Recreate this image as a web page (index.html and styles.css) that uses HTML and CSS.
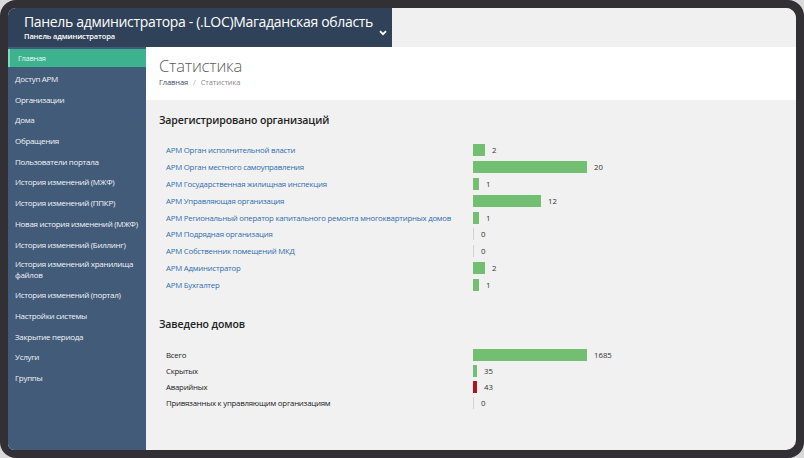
FILE: index.html
```html
<!DOCTYPE html>
<html lang="ru">
<head>
<meta charset="utf-8">
<title>Статистика</title>
<link rel="stylesheet" href="styles.css">
</head>
<body>
<div class="device">
  <div class="screen">
    <div class="topbar">
      <div class="brand">
        <div class="brand-text">
          <div class="brand-title">Панель администратора - (.LOC)Магаданская область</div>
          <div class="brand-sub">Панель администратора</div>
        </div>
        <svg class="chev" width="8" height="6" viewBox="0 0 8 6"><path d="M1 1.2 L4 4.2 L7 1.2" fill="none" stroke="#fff" stroke-width="1.8"/></svg>
      </div>
      <div class="topfill"></div>
    </div>
    <div class="body">
      <nav class="sidebar">
        <a class="nav-item active">Главная</a>
        <a class="nav-item">Доступ АРМ</a>
        <a class="nav-item">Организации</a>
        <a class="nav-item">Дома</a>
        <a class="nav-item">Обращения</a>
        <a class="nav-item">Пользователи портала</a>
        <a class="nav-item">История изменений (МЖФ)</a>
        <a class="nav-item">История изменений (ППКР)</a>
        <a class="nav-item">Новая история изменений (МЖФ)</a>
        <a class="nav-item">История изменений (Биллинг)</a>
        <a class="nav-item two">История изменений хранилища<br>файлов</a>
        <a class="nav-item">История изменений (портал)</a>
        <a class="nav-item">Настройки системы</a>
        <a class="nav-item">Закрытие периода</a>
        <a class="nav-item">Услуги</a>
        <a class="nav-item">Группы</a>
      </nav>
      <main class="content">
        <div class="page-head">
          <h1 class="page-title">Статистика</h1>
          <div class="crumbs"><span class="crumb-home">Главная</span><span class="crumb-sep">/</span><span>Статистика</span></div>
        </div>
        <div class="page-body">
          <h2 class="section-title">Зарегистрировано организаций</h2>
          <div class="stats orgs">
            <div class="row"><a class="label link">АРМ Орган исполнительной власти</a><div class="val"><span class="bar" style="width:12px"></span><span class="num">2</span></div></div>
            <div class="row"><a class="label link">АРМ Орган местного самоуправления</a><div class="val"><span class="bar" style="width:114px"></span><span class="num">20</span></div></div>
            <div class="row"><a class="label link">АРМ Государственная жилищная инспекция</a><div class="val"><span class="bar" style="width:6px"></span><span class="num">1</span></div></div>
            <div class="row"><a class="label link">АРМ Управляющая организация</a><div class="val"><span class="bar" style="width:68px"></span><span class="num">12</span></div></div>
            <div class="row"><a class="label link">АРМ Региональный оператор капитального ремонта многоквартирных домов</a><div class="val"><span class="bar" style="width:6px"></span><span class="num">1</span></div></div>
            <div class="row"><a class="label link">АРМ Подрядная организация</a><div class="val"><span class="bar zero"></span><span class="num">0</span></div></div>
            <div class="row"><a class="label link">АРМ Собственник помещений МКД</a><div class="val"><span class="bar zero"></span><span class="num">0</span></div></div>
            <div class="row"><a class="label link">АРМ Администратор</a><div class="val"><span class="bar" style="width:12px"></span><span class="num">2</span></div></div>
            <div class="row"><a class="label link">АРМ Бухгалтер</a><div class="val"><span class="bar" style="width:6px"></span><span class="num">1</span></div></div>
          </div>
          <h2 class="section-title houses-title">Заведено домов</h2>
          <div class="stats houses">
            <div class="row"><span class="label">Всего</span><div class="val"><span class="bar" style="width:114px"></span><span class="num">1685</span></div></div>
            <div class="row"><span class="label">Скрытых</span><div class="val"><span class="bar" style="width:4px"></span><span class="num">35</span></div></div>
            <div class="row"><span class="label">Аварийных</span><div class="val"><span class="bar red" style="width:4px"></span><span class="num">43</span></div></div>
            <div class="row"><span class="label">Привязанных к управляющим организациям</span><div class="val"><span class="bar zero"></span><span class="num">0</span></div></div>
          </div>
        </div>
      </main>
    </div>
  </div>
</div>
</body>
</html>
```
FILE: styles.css
```css
* { box-sizing: border-box; }
html, body { margin: 0; padding: 0; background: #d9d9d9; }
body { font-family: "Open Sans", "Liberation Sans", sans-serif; }

.device {
  width: 804px;
  height: 458px;
  background: #323034;
  border-radius: 16px;
  padding: 8px;
}
.screen {
  width: 788px;
  height: 442px;
  border-radius: 8px 10px 10px 6px;
  overflow: hidden;
  background: #f1f1f1;
  display: flex;
  flex-direction: column;
}

.topbar { display: flex; height: 39px; flex: none; }
.brand {
  width: 384px;
  background: #2f4259;
  display: flex;
  align-items: center;
  padding-left: 16px;
  padding-right: 5px;
}
.brand-text { flex: 1; min-width: 0; }
.brand-title { color: #fff; font-size: 14px; line-height: 17px; letter-spacing: -0.33px; white-space: nowrap; margin-top: -1px; }
.brand-sub { color: #fff; font-size: 7.5px; font-weight: 600; line-height: 10px; margin-top: 1px; letter-spacing: -0.15px; white-space: nowrap; }
.chev { margin-top: 10px; flex: none; }
.topfill { flex: 1; background: #f0f0f0; }

.body { flex: 1; display: flex; min-height: 0; }
.sidebar {
  width: 138px;
  flex: none;
  background: #425b79;
  display: flex;
  flex-direction: column;
  padding-top: 2px;
}
.nav-item {
  display: block;
  color: #f0f3f7;
  font-size: 8px;
  letter-spacing: -0.3px;
  white-space: nowrap;
  line-height: 11px;
  padding: 5px 7px 4.7px 7px;
}
.nav-item.two { padding-top: 4px; padding-bottom: 4px; }
.nav-item.active {
  background: #3db28e;
  border-left: 2px solid #7fd9bd;
  padding-left: 8px;
  font-size: 7.5px;
  padding-top: 3.5px;
  padding-bottom: 3.5px;
  margin-bottom: 1px;
  color: #e9f8f2;
}

.content { flex: 1; display: flex; flex-direction: column; }
.page-head {
  background: #fff;
  height: 53px;
  padding: 7px 13px 0;
}
.page-title {
  margin: 0;
  font-size: 16.5px;
  font-weight: 300;
  color: #5c5c5c;
  line-height: 23px;
  letter-spacing: -0.2px;
}
.crumbs { font-size: 7.5px; color: #8a8a8a; line-height: 10px; margin-top: 0; letter-spacing: -0.1px; }
.crumb-home { color: #3a4b5e; }
.crumb-sep { color: #aaa; margin: 0 5px; }

.page-body { padding: 13px 13px 0; }
.section-title {
  margin: 0;
  font-size: 10.5px;
  font-weight: 600;
  color: #222;
  line-height: 14px;
  letter-spacing: -0.1px;
}
.stats { padding-left: 7px; }
.orgs { margin-top: 15px; }
.row { display: flex; align-items: center; height: 16.8px; }
.houses .row { height: 16px; }
.label { width: 307px; flex: none; font-size: 7.8px; letter-spacing: -0.22px; color: #222; white-space: nowrap; }
.link { color: #2f6db0; }
.val { display: flex; align-items: center; }
.bar { display: inline-block; height: 12px; background: #72bf72; }
.bar.red { background: #b0141e; }
.bar.zero { width: 1px; background: #d2d2d2; }
.num { font-size: 7.8px; color: #333; margin-left: 7px; }
.houses-title { margin-top: 24px; }
.houses { margin-top: 16px; }
```
